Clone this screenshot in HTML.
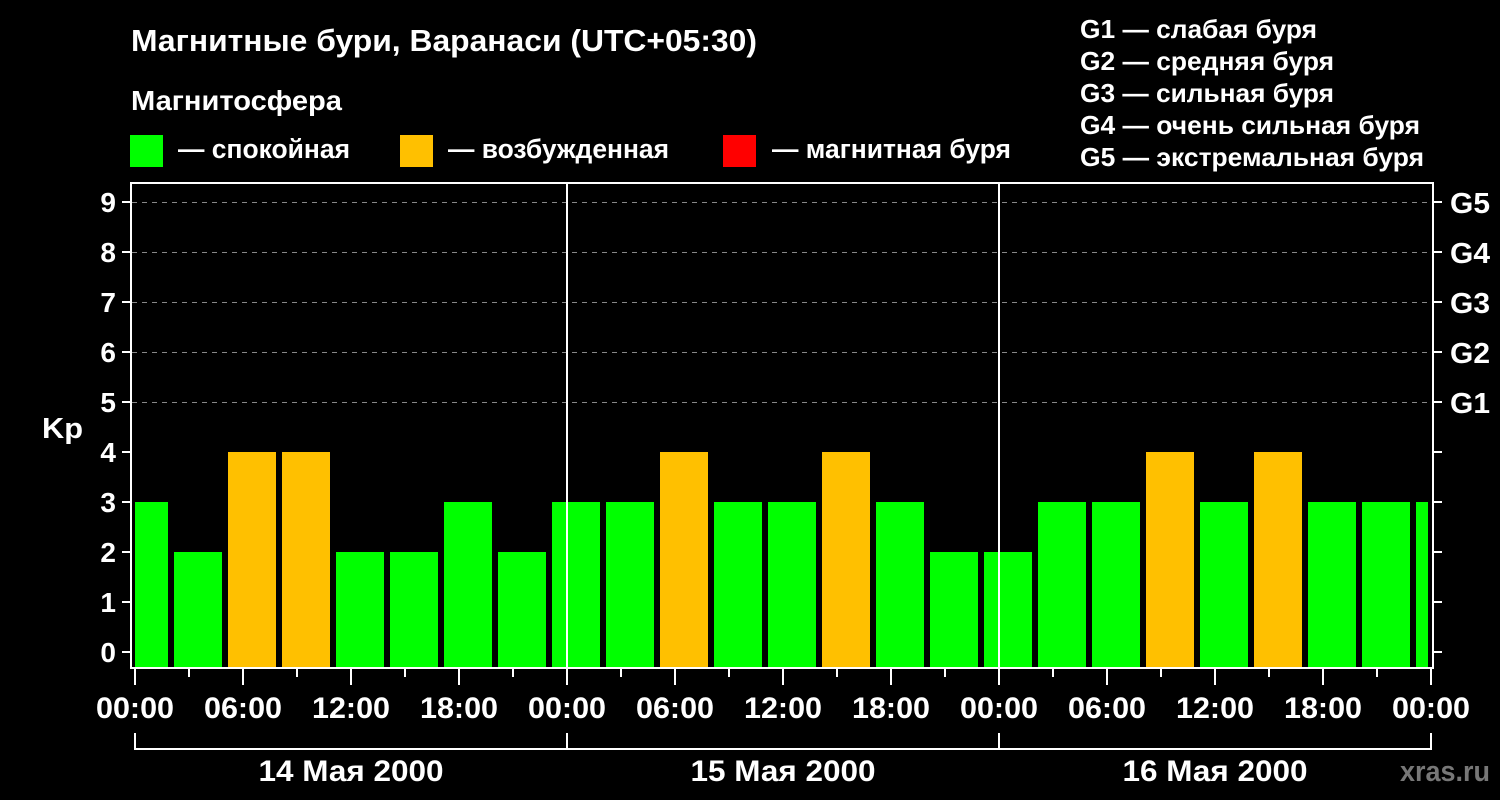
<!DOCTYPE html>
<html><head><meta charset="utf-8"><style>
html,body{margin:0;padding:0;background:#000;width:1500px;height:800px;overflow:hidden}
svg{display:block}
text{font-family:"Liberation Sans",Arial,sans-serif;font-weight:bold;fill:#fff}
</style></head><body>
<svg width="1500" height="800" viewBox="0 0 1500 800" xmlns="http://www.w3.org/2000/svg">
<rect width="1500" height="800" fill="#000"/>
<text x="131" y="51" font-size="31" textLength="626" lengthAdjust="spacingAndGlyphs">Магнитные бури, Варанаси (UTC+05:30)</text>
<text x="131" y="110" font-size="28" textLength="211" lengthAdjust="spacingAndGlyphs">Магнитосфера</text>
<rect x="130" y="135" width="33" height="32" fill="#00ff00"/>
<rect x="400" y="135" width="33" height="32" fill="#ffc000"/>
<rect x="723" y="135" width="33" height="32" fill="#ff0000"/>
<text x="178" y="158" font-size="27" textLength="172" lengthAdjust="spacingAndGlyphs">— спокойная</text>
<text x="448" y="158" font-size="27" textLength="221" lengthAdjust="spacingAndGlyphs">— возбужденная</text>
<text x="772" y="158" font-size="27" textLength="239" lengthAdjust="spacingAndGlyphs">— магнитная буря</text>
<g font-size="26">
<text x="1080" y="38" textLength="237" lengthAdjust="spacingAndGlyphs">G1 — слабая буря</text>
<text x="1080" y="70" textLength="254" lengthAdjust="spacingAndGlyphs">G2 — средняя буря</text>
<text x="1080" y="102" textLength="254" lengthAdjust="spacingAndGlyphs">G3 — сильная буря</text>
<text x="1080" y="134" textLength="340" lengthAdjust="spacingAndGlyphs">G4 — очень сильная буря</text>
<text x="1080" y="166" textLength="344" lengthAdjust="spacingAndGlyphs">G5 — экстремальная буря</text>
</g>
<g stroke="#888" stroke-width="1" stroke-dasharray="5,5">
<line x1="132" y1="202.5" x2="1432" y2="202.5"/>
<line x1="132" y1="252.5" x2="1432" y2="252.5"/>
<line x1="132" y1="302.5" x2="1432" y2="302.5"/>
<line x1="132" y1="352.5" x2="1432" y2="352.5"/>
<line x1="132" y1="402.5" x2="1432" y2="402.5"/>
</g>
<svg x="135" y="0" width="1293" height="800" overflow="hidden">
<g transform="translate(-135,0)">
<rect x="120" y="502" width="48" height="166" fill="#00ff00"/>
<rect x="174" y="552" width="48" height="116" fill="#00ff00"/>
<rect x="228" y="452" width="48" height="216" fill="#ffc000"/>
<rect x="282" y="452" width="48" height="216" fill="#ffc000"/>
<rect x="336" y="552" width="48" height="116" fill="#00ff00"/>
<rect x="390" y="552" width="48" height="116" fill="#00ff00"/>
<rect x="444" y="502" width="48" height="166" fill="#00ff00"/>
<rect x="498" y="552" width="48" height="116" fill="#00ff00"/>
<rect x="552" y="502" width="48" height="166" fill="#00ff00"/>
<rect x="606" y="502" width="48" height="166" fill="#00ff00"/>
<rect x="660" y="452" width="48" height="216" fill="#ffc000"/>
<rect x="714" y="502" width="48" height="166" fill="#00ff00"/>
<rect x="768" y="502" width="48" height="166" fill="#00ff00"/>
<rect x="822" y="452" width="48" height="216" fill="#ffc000"/>
<rect x="876" y="502" width="48" height="166" fill="#00ff00"/>
<rect x="930" y="552" width="48" height="116" fill="#00ff00"/>
<rect x="984" y="552" width="48" height="116" fill="#00ff00"/>
<rect x="1038" y="502" width="48" height="166" fill="#00ff00"/>
<rect x="1092" y="502" width="48" height="166" fill="#00ff00"/>
<rect x="1146" y="452" width="48" height="216" fill="#ffc000"/>
<rect x="1200" y="502" width="48" height="166" fill="#00ff00"/>
<rect x="1254" y="452" width="48" height="216" fill="#ffc000"/>
<rect x="1308" y="502" width="48" height="166" fill="#00ff00"/>
<rect x="1362" y="502" width="48" height="166" fill="#00ff00"/>
<rect x="1416" y="502" width="48" height="166" fill="#00ff00"/>
</g>
</svg>
<g stroke="#fff" stroke-width="2">
<line x1="567" y1="183" x2="567" y2="668"/>
<line x1="999" y1="183" x2="999" y2="668"/>
</g>
<rect x="131" y="183" width="1302" height="485" fill="none" stroke="#fff" stroke-width="2"/>
<g stroke="#fff" stroke-width="2">
<line x1="122" y1="652" x2="131" y2="652"/><line x1="1433" y1="652" x2="1442" y2="652"/>
<line x1="122" y1="602" x2="131" y2="602"/><line x1="1433" y1="602" x2="1442" y2="602"/>
<line x1="122" y1="552" x2="131" y2="552"/><line x1="1433" y1="552" x2="1442" y2="552"/>
<line x1="122" y1="502" x2="131" y2="502"/><line x1="1433" y1="502" x2="1442" y2="502"/>
<line x1="122" y1="452" x2="131" y2="452"/><line x1="1433" y1="452" x2="1442" y2="452"/>
<line x1="122" y1="402" x2="131" y2="402"/><line x1="1433" y1="402" x2="1442" y2="402"/>
<line x1="122" y1="352" x2="131" y2="352"/><line x1="1433" y1="352" x2="1442" y2="352"/>
<line x1="122" y1="302" x2="131" y2="302"/><line x1="1433" y1="302" x2="1442" y2="302"/>
<line x1="122" y1="252" x2="131" y2="252"/><line x1="1433" y1="252" x2="1442" y2="252"/>
<line x1="122" y1="202" x2="131" y2="202"/><line x1="1433" y1="202" x2="1442" y2="202"/>
</g>
<g font-size="28" text-anchor="end">
<text x="116" y="662">0</text><text x="116" y="612">1</text><text x="116" y="562">2</text>
<text x="116" y="512">3</text><text x="116" y="462">4</text><text x="116" y="412">5</text>
<text x="116" y="362">6</text><text x="116" y="312">7</text><text x="116" y="262">8</text>
<text x="116" y="212">9</text>
</g>
<text x="42" y="438" font-size="29" textLength="41" lengthAdjust="spacingAndGlyphs">Kp</text>
<g font-size="29">
<text x="1450" y="213" textLength="40" lengthAdjust="spacingAndGlyphs">G5</text>
<text x="1450" y="263" textLength="40" lengthAdjust="spacingAndGlyphs">G4</text>
<text x="1450" y="313" textLength="40" lengthAdjust="spacingAndGlyphs">G3</text>
<text x="1450" y="363" textLength="40" lengthAdjust="spacingAndGlyphs">G2</text>
<text x="1450" y="413" textLength="40" lengthAdjust="spacingAndGlyphs">G1</text>
</g>
<g stroke="#fff" stroke-width="2">
<line x1="135" y1="668" x2="135" y2="685"/><line x1="189" y1="668" x2="189" y2="677"/>
<line x1="243" y1="668" x2="243" y2="685"/><line x1="297" y1="668" x2="297" y2="677"/>
<line x1="351" y1="668" x2="351" y2="685"/><line x1="405" y1="668" x2="405" y2="677"/>
<line x1="459" y1="668" x2="459" y2="685"/><line x1="513" y1="668" x2="513" y2="677"/>
<line x1="567" y1="668" x2="567" y2="685"/><line x1="621" y1="668" x2="621" y2="677"/>
<line x1="675" y1="668" x2="675" y2="685"/><line x1="729" y1="668" x2="729" y2="677"/>
<line x1="783" y1="668" x2="783" y2="685"/><line x1="837" y1="668" x2="837" y2="677"/>
<line x1="891" y1="668" x2="891" y2="685"/><line x1="945" y1="668" x2="945" y2="677"/>
<line x1="999" y1="668" x2="999" y2="685"/><line x1="1053" y1="668" x2="1053" y2="677"/>
<line x1="1107" y1="668" x2="1107" y2="685"/><line x1="1161" y1="668" x2="1161" y2="677"/>
<line x1="1215" y1="668" x2="1215" y2="685"/><line x1="1269" y1="668" x2="1269" y2="677"/>
<line x1="1323" y1="668" x2="1323" y2="685"/><line x1="1377" y1="668" x2="1377" y2="677"/>
<line x1="1431" y1="668" x2="1431" y2="685"/>
<line x1="135" y1="733" x2="135" y2="750"/><line x1="567" y1="733" x2="567" y2="750"/>
<line x1="999" y1="733" x2="999" y2="750"/><line x1="1431" y1="733" x2="1431" y2="750"/>
<line x1="134" y1="749" x2="1432" y2="749"/>
</g>
<g font-size="30" text-anchor="middle">
<text x="135" y="718" textLength="78" lengthAdjust="spacingAndGlyphs">00:00</text><text x="243" y="718" textLength="78" lengthAdjust="spacingAndGlyphs">06:00</text><text x="351" y="718" textLength="78" lengthAdjust="spacingAndGlyphs">12:00</text><text x="459" y="718" textLength="78" lengthAdjust="spacingAndGlyphs">18:00</text>
<text x="567" y="718" textLength="78" lengthAdjust="spacingAndGlyphs">00:00</text><text x="675" y="718" textLength="78" lengthAdjust="spacingAndGlyphs">06:00</text><text x="783" y="718" textLength="78" lengthAdjust="spacingAndGlyphs">12:00</text><text x="891" y="718" textLength="78" lengthAdjust="spacingAndGlyphs">18:00</text>
<text x="999" y="718" textLength="78" lengthAdjust="spacingAndGlyphs">00:00</text><text x="1107" y="718" textLength="78" lengthAdjust="spacingAndGlyphs">06:00</text><text x="1215" y="718" textLength="78" lengthAdjust="spacingAndGlyphs">12:00</text><text x="1323" y="718" textLength="78" lengthAdjust="spacingAndGlyphs">18:00</text>
<text x="1431" y="718" textLength="78" lengthAdjust="spacingAndGlyphs">00:00</text>
</g>
<g font-size="30" text-anchor="middle">
<text x="351" y="781" textLength="185" lengthAdjust="spacingAndGlyphs">14 Мая 2000</text>
<text x="783" y="781" textLength="185" lengthAdjust="spacingAndGlyphs">15 Мая 2000</text>
<text x="1215" y="781" textLength="185" lengthAdjust="spacingAndGlyphs">16 Мая 2000</text>
</g>
<text x="1400" y="781" font-size="29" style="fill:#777" textLength="90" lengthAdjust="spacingAndGlyphs">xras.ru</text>
</svg>
</body></html>
